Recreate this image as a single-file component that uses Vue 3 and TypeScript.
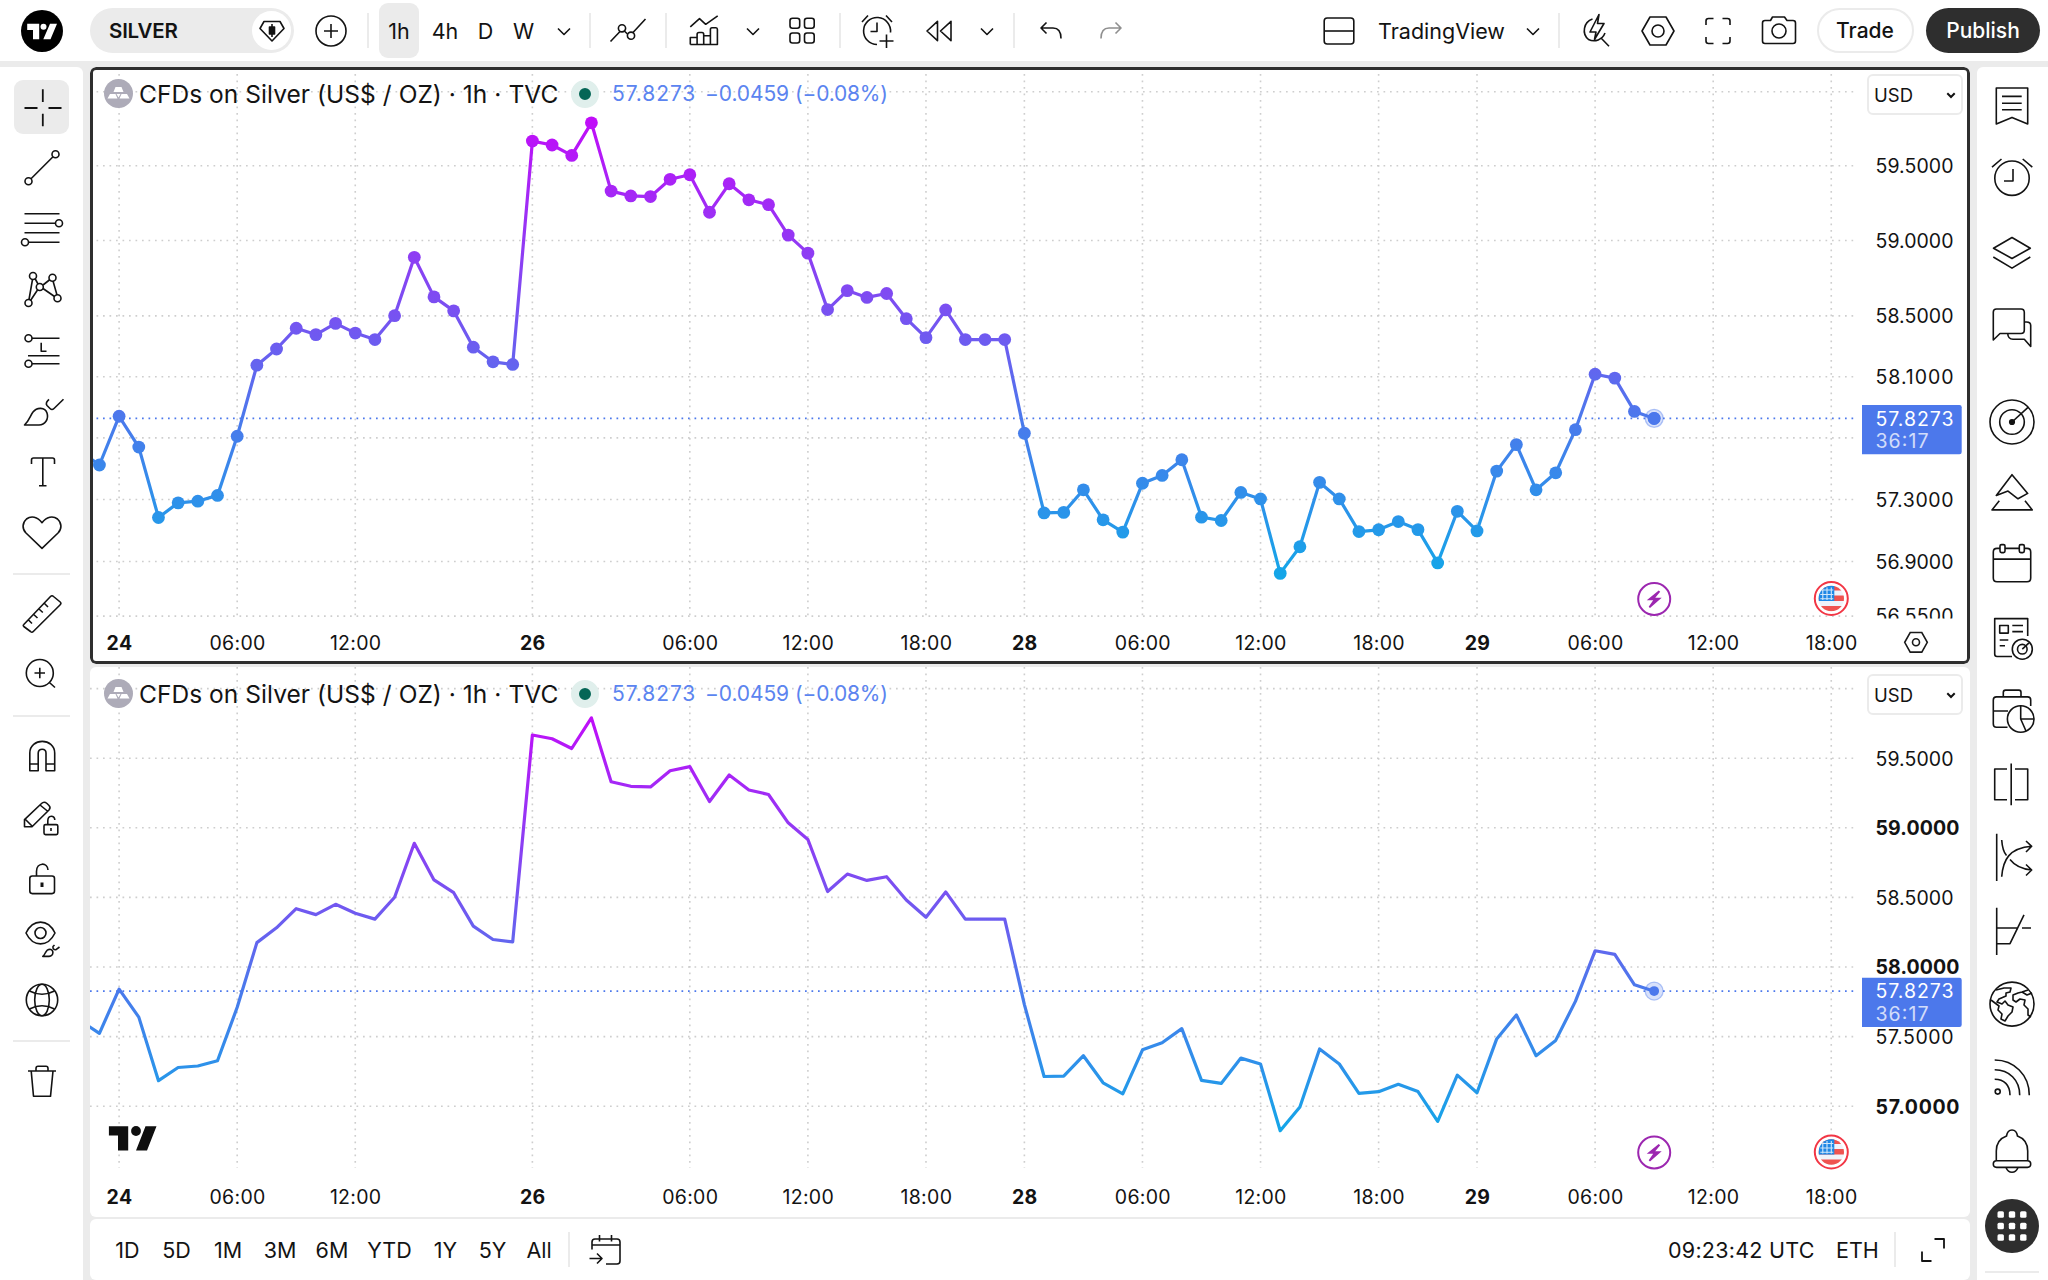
<script setup lang="ts">
interface Tool { w: number; icon?: string; text?: string; cls?: string }

const icons: Record<string, string> = {
  plusCircle: '<circle r="15"/><path d="M-7 0H7M0-7V7"/>',
  chevron: '<path d="M-6-2.500L0 3.500L6-2.500"/>',
  lineChart: '<path d="M-17.500 10.500L-8 .5M-3.700 0L-.5 3M5 1.500L17.500-12"/><circle cx="-6" cy="-2.700" r="3.600"/><circle cx="3" cy="4.700" r="3.600"/>',
  indicators: '<path d="M-13.700-4.200L-4.500-12.300L1.700-6.700L13.700-15.200M-13.700 13.500V6.500H-6.900V13.500M-6.900 6.500V3.500Q-6.900 1.500-5 1.500H-2Q-.3 1.500-.3 3.500V13.500M-.3 4.800H6.400V13.500M6.400 5V-1.500Q6.400-3.300 8-3.300H12Q13.400-3.300 13.400-1.500V13.500H-13.700"/>',
  grid: '<rect x="-12" y="-12.700" width="9.700" height="10" rx="2.500"/><rect x="2.500" y="-12.700" width="9.700" height="10" rx="2.500"/><rect x="-12" y="2" width="9.700" height="10" rx="2.500"/><rect x="2.500" y="2" width="9.700" height="10" rx="2.500"/>',
  alarmAdd: '<path d="M13.500 1.500A13.500 13.500 0 1 0 0 13.500M0-8.500V.5H-6.500M-15-9L-9-15.500M9-15.500L15-9M9.500 3.500V17M2.500 10H16.500"/>',
  replay: '<path d="M-1.500-9.700V9.700L-12 0ZM12-9.700V9.700L1.500 0Z"/>',
  undo: '<path d="M-4.500-8.500L-10-3L-4.500 2.500M-10-3H2Q10-3 10 7.500"/>',
  redo: '<path d="M4.500-8.500L10-3L4.500 2.500M10-3H-2Q-10-3-10 7.500"/>',
  layout: '<rect x="-14.800" y="-13" width="29.600" height="26" rx="3"/><path d="M-14.800 0H14.800"/>',
  flash: '<path d="M-3.500-12A12 12 0 0 0-7.500 8.500A12 12 0 0 0 9 2M5 7L13 15.200M3-16.500L-6 1H0L-1.500 8.500L8-7.500H1.500Z"/>',
  hex: '<path d="M-8-14H8L16 0L8 14H-8L-16 0Z"/><circle r="6"/>',
  full: '<path d="M-12-6V-10Q-12-12.500-9.500-12.500H-4.500M4.500-12.500H9.500Q12-12.500 12-10V-6M12 6V10Q12 12.500 9.500 12.500H4.500M-4.500 12.500H-9.500Q-12 12.500-12 10V6"/>',
  camera: '<path d="M-16.500-8Q-16.500-10.500-14-10.500H-8.500L-6.500-14H5.500L8-10.500H14Q16.500-10.500 16.500-8V10Q16.500 12.500 14 12.500H-14Q-16.500 12.500-16.500 10Z"/><circle r="7"/>',
  gem: '<path d="M-8-9.500H8L12-2.500L0 10L-12-2.500Z"/><path d="M0-7V6" stroke-width="1.600"/><rect x="-2.500" y="-4" width="5" height="7" fill="currentColor"/>',

  cross: '<path d="M-17.500 1H-4.500M6.500 1H19.500M.8-17.700V-5M.8 6.700V19.300" stroke-width="1.800"/>',
  trend: '<circle cx="13.500" cy="-13.700" r="3.500"/><circle cx="-13.500" cy="13.300" r="3.500"/><path d="M-11 10.800L11-11.200"/>',
  fib: '<path d="M-17.500-15.300H17.500M-17.500-5.800H13.500M-17.500 3.700H17.500M-13.500 13.300H17.500"/><circle cx="17" cy="-5.800" r="3.500"/><circle cx="-17" cy="13.300" r="3.500"/>',
  pattern: '<path d="M-9.500-10.500L-13 9.500M-7-11.500L-4-6M1-5L8-10.500M11-9L15 5M1-1.500L12.500 6.500M-4.500 0L-11.500 10.500"/><circle cx="-9" cy="-14" r="3.500"/><circle cx="10.500" cy="-12.300" r="3.500"/><circle cx="-2.200" cy="-3" r="3.500"/><circle cx="-13.500" cy="13" r="3.500"/><circle cx="15.500" cy="8.300" r="3.500"/>',
  position: '<circle cx="-13.500" cy="-12.700" r="3.500"/><circle cx="-13.500" cy="12.700" r="3.500"/><path d="M-10-12.700H17.500M-.8-8.300V.3H4.500M-14 4.700H17.500M-10 12.700H17.500"/>',
  brush: '<path d="M-17.500 13C-13 9-11.500 3-9 0C-5-5 3-5 5 1C7 7 3 13-3 13ZM21.500-12.700L12-3.500Q10-1.500 8-3.500L5-6.500Q3-9 7-12.700"/>',
  text: '<path d="M-10.500-9V-13Q-10.500-15-8.500-15H10.500Q12.500-15 12.500-13V-9M.8-15V12.700M-3 12.700H4.500"/>',
  heart: '<path d="M0 14.300L-16-1C-20-5-20-11-15.500-15C-11-18.500-4.500-17.500 0-11.300C4.500-17.500 11-18.500 15.500-15C20-11 20-5 16-1Z"/>',
  ruler: '<path d="M-18.200 9.500L8.500-18.500Q10-20 11.500-18.500L18.200-13Q19.700-11.700 18.200-10.300L-8.700 16.500Q-10 18-11.500 16.500L-18.200 11.500Q-19.300 10.500-18.200 9.500ZM-13.500 5L-10 8.500M-8.300-.5L-4.500 3M-3-6L.8-2.500M2.500-11.500L6-8"/>',
  zoomIn: '<circle cx="-2.200" cy="-3" r="13.500"/><path d="M7.400 6.500L13 11.500M-7.500-3H3M-2.200-8.300V2.300"/>',
  magnet: '<path d="M-12.200 13.700V-4C-12.200-19.500 12.700-19.500 12.700-4V13.700H4V-4C4-9-3.800-9-3.800-4V13.700ZM-12.200 7H-3.800M4 7H12.700"/>',
  pencilLock: '<path d="M-17.500 8.800V1.600L-.5-14.500Q2-17 5-14.500L7-12.500Q9-10.500 7-8L-10 8.800ZM-16.500 1.500L-10 8M-2-13L6-6.500"/><rect x="2" y="6.600" width="13.800" height="10" rx="1.500"/><path d="M5.800 6.500V3C5.800-3.500 12.800-3 12.800 2M9 10V13"/>',
  lock: '<rect x="-12.200" y="-3" width="24.700" height="17.600" rx="2.500"/><path d="M-5.500-3V-7.500C-5.500-17 5.800-17 6-9"/><path d="M0 3.500V8" stroke-width="3"/>',
  eye: '<path d="M-16-7C-9-21.500 6-21.500 13-7C6 7.500-9 7.500-16-7Z"/><circle cx="-1.500" cy="-7" r="5.500"/><path d="M.8 16.400C4 14 3 9.500 8 9.300C12 9.500 12 16 7 16.400ZM17.500 7L14 9.700Q10.500 10 11 6.500L12.500 5"/>',
  globe: '<circle cy="-1" r="15.700"/><ellipse cy="-1" rx="7.300" ry="15.700"/><path d="M-12.500-10Q0-3.500 12.500-10M-12.500 8Q0 1.500 12.500 8"/>',
  trash: '<path d="M-14-11H14M-6-11V-13.500Q-6-15.700-4-15.700H4Q6-15.700 6-13.500V-11M-10.800-11L-8.500 14.300H8.500L11-11"/>',

  bookmark: '<path d="M-15.700-18H15.700V18L0 11.400L-15.700 18ZM-10-9.600H9.700M-10-2.700H9.700M-10 3.700H9.700"/>',
  alarm: '<circle cy="-.8" r="17.200"/><path d="M1-10V2H-8M-20-11.900L-10.500-20M10.700-20L20.300-11.900"/>',
  layers: '<path d="M-18.500-4.800L0-15.500L18.300-4.800L0 5.500ZM-18.700 4L0 15.100L18.300 4"/>',
  chat: '<path d="M-18.700 14V-14Q-18.700-17-15.500-17H9Q12.300-17 12.300-13.500V4Q12.300 7.500 9 7.500H-12ZM12.300-4H14.500Q18.700-4 18.700-.5V20.500L12.300 13.300H1Q-4 13-4.300 7.500"/>',
  target: '<circle cy="5" r="22"/><circle cy="5" r="12.300"/><circle cy="5" r="2.300" fill="currentColor"/><path d="M0 5L16.300-9.900"/>',
  pyramid: '<path d="M0-16.300L-15.700 4.400L-4 .1L6 7.800L15.700 2.400ZM-12.700 9.700L-20 18.900H20.300L13 9.700"/>',
  calendar: '<path d="M-12-15.600H-15Q-18.700-15.600-18.700-12V14Q-18.700 17.700-15 17.700H15Q18.700 17.700 18.700 14V-12Q18.700-15.600 15-15.600H12.500M-7-15.600H7.500M-18.700-4.900H18.700"/><rect x="-12" y="-19.400" width="5" height="8" rx="1.500"/><rect x="7.300" y="-19.400" width="5" height="8" rx="1.500"/>',
  news: '<path d="M15.700-2V-19.400H-17.300V16Q-17.300 18.500-15 18.500H0"/><rect x="-12.300" y="-12.500" width="8.600" height="7.600"/><path d="M.3-12.500H11M.3-6.400H11M-12.300 2H-3.700M-12.300 7.800H-7"/><circle cx="10.300" cy="11.200" r="10"/><circle cx="10.300" cy="11.200" r="4.800"/><path d="M10.300 11.200L17 4.800"/>',
  portfolio: '<path d="M18.700-5V-11Q18.700-14.100 15.500-14.100H-15.500Q-18.700-14.100-18.700-11V13Q-18.700 16.300-15.500 16.300H-4.500M-8.700-14.100V-18.500Q-8.700-20.900-6.500-20.900H7Q9-20.900 9-18.500V-14.100M-18.700 0H-4"/><circle cx="8.700" cy="8" r="13.300"/><path d="M8.700-5.300V8H22M8.700 8L14 20"/>',
  split: '<path d="M-5-16H-17.300V14.800H-5M-.8-21.600V20.300M3-16H15.700V14.800H3"/>',
  forecast: '<path d="M-15.300-24.300V23M-10.300 18.800C-9 2-3-10 19.700-11.700M-10.300-18Q-9.500-7-5.500-2.500M-2 1.500C3 8 9 11 19.700 12M14-17L19.700-11.700L14-6M14 6.500L19.700 12L14 17.500"/>',
  slope: '<path d="M-15.300-24.300V23M-15.300-4H5M10-4H19M-15.300 11.700H-2L12-17.200"/>',
  earth: '<circle cy="-.9" r="22"/><path d="M-16-15L-8-17H-1L-2-13L-6-12V-9L-13-6L-15-3L-10-1L-7-4L-4 0L1 2L0 7L-4 11L-7 16L-11 14L-10 9L-14 5L-13 1L-21-5M16-15L10-13L6-12L1-10V-5L4-3L8-6L13-5L12 0L16 4V10L19 12M10-13L15-10L20-12"/>',
  feed: '<circle cx="-14.300" cy="12.600" r="2.500"/><path d="M-17.300 .2C-8 .2-2 6-2 16.200M-17.300-9.200C-3-9.200 7.700 1 7.700 16.200M-17.300-19C2-19 17.300-4 17.300 16.200"/>',
  bell: '<path d="M-15.700 8.500V-1C-15.700-9-11-14-5.500-16Q-4.500-22 0-22Q4.500-22 5.500-16C11-14 15.700-9 15.700-1V8.500M-6 15.500Q-4 20.300 0 20.300Q4 20.300 6 15.500"/><rect x="-18.700" y="8.700" width="37.400" height="6.700" rx="3.300"/>',
  apps: '<circle r="27" fill="#2e2e2e" stroke="none"/><g fill="#fff" stroke="none"><rect x="-14.500" y="-14.700" width="6.400" height="6.400" rx="1.500"/><rect x="-3.200" y="-14.700" width="6.400" height="6.400" rx="1.500"/><rect x="8.100" y="-14.700" width="6.400" height="6.400" rx="1.500"/><rect x="-14.500" y="-3.200" width="6.400" height="6.400" rx="1.500"/><rect x="-3.200" y="-3.200" width="6.400" height="6.400" rx="1.500"/><rect x="8.100" y="-3.200" width="6.400" height="6.400" rx="1.500"/><rect x="-14.500" y="8.300" width="6.400" height="6.400" rx="1.500"/><rect x="-3.200" y="8.300" width="6.400" height="6.400" rx="1.500"/><rect x="8.100" y="8.300" width="6.400" height="6.400" rx="1.500"/></g>',
  goTo: '<path d="M-13-.5V-8Q-13-11-10-11H12Q15-11 15-8V11Q15 14 12 14H1M-13-5H15M-5.500-15V-8.500M6.500-15V-8.500M-15.500 8.500H-3M-8 3.500L-3 8.500L-8 13.500"/>',
  expand: '<path d="M1.500-11H11V-1.500M-1.500 11H-11V1.500" stroke-width="1.800"/>',
}

const leftGroups: string[][] = [
  ['cross', 'trend', 'fib', 'pattern', 'position', 'brush', 'text', 'heart'],
  ['ruler', 'zoomIn'],
  ['magnet', 'pencilLock', 'lock', 'eye', 'globe'],
  ['trash'],
]
const rightGroups: string[][] = [
  ['bookmark', 'alarm', 'layers', 'chat'],
  ['target', 'pyramid', 'calendar', 'news', 'portfolio', 'split', 'forecast', 'slope', 'earth', 'feed', 'bell', 'apps'],
]

const headLeft: Tool[] = [
  { w: 73, icon: 'plusCircle' }, { w: 2, cls: 'sep' }, { w: 10 },
  { w: 40, text: '1h', cls: 'on' }, { w: 52, text: '4h' }, { w: 29, text: 'D' }, { w: 47, text: 'W' },
  { w: 33, icon: 'chevron' }, { w: 9 }, { w: 2, cls: 'sep' },
  { w: 74, icon: 'lineChart' }, { w: 2, cls: 'sep' },
  { w: 74, icon: 'indicators' }, { w: 23, icon: 'chevron' }, { w: 75, icon: 'grid' }, { w: 2, cls: 'sep' },
  { w: 71, icon: 'alarmAdd' }, { w: 53, icon: 'replay' }, { w: 44, icon: 'chevron' }, { w: 4 }, { w: 2, cls: 'sep' },
  { w: 72, icon: 'undo' }, { w: 48, icon: 'redo', cls: 'dim' },
]
const headRight: Tool[] = [
  { w: 52, icon: 'layout' }, { w: 153, text: 'TradingView', cls: 'name' }, { w: 30, icon: 'chevron' }, { w: 10 }, { w: 2, cls: 'sep' },
  { w: 71, icon: 'flash' }, { w: 54, icon: 'hex' }, { w: 66, icon: 'full' }, { w: 55, icon: 'camera' },
]

const ranges: [string, number][] = [
  ['1D', 47], ['5D', 51], ['1M', 52], ['3M', 52], ['6M', 52], ['YTD', 63], ['1Y', 49], ['5Y', 45], ['All', 48],
]

// Time scale
const x = (i: number) => 119.1 + 19.68 * i
const times: [number, string, boolean?][] = [
  [0, '24', true], [6, '06:00'], [12, '12:00'], [21, '26', true], [29, '06:00'], [35, '12:00'], [41, '18:00'],
  [46, '28', true], [52, '06:00'], [58, '12:00'], [64, '18:00'], [69, '29', true], [75, '06:00'], [81, '12:00'], [87, '18:00'],
]

// Closes are kept as levels on a logarithmic grid, starting two bars before the 24th
const levels = [
  345, 356, 318.7, 342.3, 396.2, 385, 383.7, 379.3, 334, 279.6, 267.2, 251.3, 256.2, 247.6, 255, 260, 241.7, 197,
  227.3, 238, 265.8, 277, 279, 108, 111, 119, 94, 146.3, 150, 150.5, 137.3, 133.8, 162.5, 140.7, 153, 156.7, 180,
  193.8, 237, 222.5, 227.7, 224.7, 244, 258.5, 237.3, 260, 260, 260, 331.7, 392.7, 392.3, 375, 398, 407.4, 370, 364,
  352, 396, 398.5, 377, 382, 439, 418.6, 369.3, 382, 407, 405.6, 399.3, 405.5, 431, 391.5, 406.5, 360.7, 340.4, 375,
  362, 329, 286.5, 289.5, 315, 320.4,
]
const closes = levels.map((l) => 60 * Math.exp(-(l * 1.30612 - 91.7) / 8856))
const logY = (p: number) => 91.7 + Math.log(60 / p) * 8856
const linY = (p: number) => 688.6 + (60 - p) * 139.2

interface Pane {
  id: string; top: number; h: number; y: (p: number) => number; dots: boolean; grid: number[]
  labels: [number, boolean?][]; v0: number; v1: number; timeY: number; eventY: number; g0: number; g1: number
}
const panes: Pane[] = [
  {
    id: 'a', top: 67, h: 597, y: logY, dots: true, grid: [60, 59.5, 59, 58.5, 58.1, 57.7, 57.3, 56.9, 56.55],
    labels: [[59.5], [59], [58.5], [58.1], [57.3], [56.9], [56.55]], v0: 74, v1: 618.5, timeY: 643, eventY: 599, g0: 120, g1: 575,
  },
  {
    id: 'b', top: 667, h: 550, y: linY, dots: false, grid: [60, 59.5, 59, 58.5, 58, 57.5, 57],
    labels: [[59.5], [59, true], [58.5], [58, true], [57.5], [57, true]], v0: 667, v1: 1168, timeY: 1196.5, eventY: 1152.5, g0: 715, g1: 1131,
  },
]
const line = (p: Pane) => closes.map((c, i) => `${x(i - 2).toFixed(1)},${p.y(c).toFixed(1)}`).join(' ')
const last = 57.8273
</script>

<template>
  <div class="app">
    <header>
      <svg class="logo" width="42" height="42" viewBox="0 0 42 42">
        <circle cx="21" cy="21" r="21" fill="#000" />
        <path d="M6.200 13.800H18.200V29.200H12V20H6.200ZM29 13.800H36L29.500 29.200H22.300Z" fill="#fff" />
        <circle cx="22.500" cy="16.800" r="3" fill="#fff" />
      </svg>
      <div class="search">
        <b>SILVER</b>
        <span><svg class="ic" viewBox="-20 -20 40 40" v-html="icons.gem" /></span>
      </div>
      <div v-for="(t, i) in headLeft" :key="i" class="tool" :class="t.cls" :style="{ width: t.w + 'px' }">
        <svg v-if="t.icon" class="ic" viewBox="-20 -20 40 40" v-html="icons[t.icon]" />
        <template v-else>{{ t.text }}</template>
      </div>
      <i class="grow" />
      <div v-for="(t, i) in headRight" :key="'r' + i" class="tool" :class="t.cls" :style="{ width: t.w + 'px' }">
        <svg v-if="t.icon" class="ic" viewBox="-20 -20 40 40" v-html="icons[t.icon]" />
        <template v-else>{{ t.text }}</template>
      </div>
      <button class="trade">Trade</button>
      <button class="publish">Publish</button>
    </header>

    <div class="body">
      <nav class="left">
        <div v-for="(g, gi) in leftGroups" :key="gi" class="group">
          <div v-for="n in g" :key="n" class="btn" :class="{ active: n === 'cross' }">
            <svg class="ic" viewBox="-20 -20 40 40" v-html="icons[n]" />
          </div>
        </div>
      </nav>

      <main>
        <section v-for="p in panes" :key="p.id" class="pane" :class="'pane-' + p.id" :style="{ height: p.h + 'px' }">
          <svg class="chart" width="1880" :height="p.h" :viewBox="`90 ${p.top} 1880 ${p.h}`">
            <defs>
              <linearGradient :id="'g' + p.id" gradientUnits="userSpaceOnUse" x1="0" x2="0" :y1="p.g0" :y2="p.g1">
                <stop offset="0" stop-color="#c10df9" />
                <stop offset=".54" stop-color="#6464ef" />
                <stop offset=".65" stop-color="#4c78ec" />
                <stop offset="1" stop-color="#14a6e8" />
              </linearGradient>
              <clipPath :id="'c' + p.id"><rect x="90" :y="p.top" width="1880" :height="p.v1 - p.top" /></clipPath>
            </defs>
            <g class="gridlines">
              <line v-for="t in times" :key="t[0]" :x1="x(t[0])" :x2="x(t[0])" :y1="p.v0" :y2="p.v1" />
              <line v-for="v in p.grid" :key="v" x1="90" x2="1858" :y1="p.y(v)" :y2="p.y(v)" />
            </g>
            <line class="last" x1="90" x2="1858" :y1="p.y(last)" :y2="p.y(last)" />
            <polyline :points="line(p)" fill="none" :stroke="`url(#g${p.id})`" stroke-width="3.200" stroke-linejoin="round" />
            <g v-if="p.dots" :fill="`url(#g${p.id})`">
              <circle v-for="(c, i) in closes" :key="i" :cx="x(i - 2)" :cy="p.y(c)" r="6.400" />
            </g>
            <circle :cx="x(78)" :cy="p.y(last)" r="9" fill="#4c78ec" fill-opacity=".22" stroke="#4c78ec" stroke-opacity=".4" stroke-width="1.300" />
            <circle :cx="x(78)" :cy="p.y(last)" :r="p.dots ? 6.4 : 4.9" fill="#4c78ec" />

            <g :clip-path="`url(#c${p.id})`">
              <text v-for="l in p.labels" :key="l[0]" class="price" :class="{ bold: l[1] }" x="1875.500" :y="p.y(l[0]) + 7.3" :textLength="l[1] ? 84 : 78">{{ l[0].toFixed(4) }}</text>
            </g>
            <path :transform="`translate(1862 ${p.y(last) - 13.3})`" d="M0 0H97.500Q99.700 0 99.700 2.200V47Q99.700 49.300 97.500 49.300H0Z" fill="#4c78eb" />
            <text class="price tag" x="1875.500" :y="p.y(last) + 7.3" textLength="78">57.8273</text>
            <text class="price tag faded" x="1875.500" :y="p.y(last) + 29.5" textLength="53">36:17</text>

            <text v-for="t in times" :key="'t' + t[0]" class="time" :class="{ bold: t[2] }" :x="x(t[0]) + .4" :y="p.timeY + 7">{{ t[1] }}</text>

            <g :transform="`translate(1654.200 ${p.eventY})`">
              <circle r="16" fill="#fff" stroke="#9c27b0" stroke-width="2" />
              <path d="M4.500-8.500L-7.500 1.300H-1L-5.500 7.800L-4.200 9L7.500-1.300H1L6-7.300Z" fill="#9c27b0" />
            </g>
            <g :transform="`translate(1831.300 ${p.eventY - .5})`">
              <clipPath :id="'f' + p.id"><circle r="12.700" /></clipPath>
              <circle r="16.500" fill="#fff" stroke="#f23645" stroke-width="2" />
              <g :clip-path="`url(#f${p.id})`">
                <rect x="-13" y="-13" width="26" height="26" fill="#f0f3fa" />
                <path d="M-13-13H13V-8H-13ZM-13-3H13V2.500H-13ZM-13 7.500H13V13H-13Z" fill="#ef5350" />
                <rect x="-13" y="-13" width="16" height="15.500" fill="#1e88e5" />
                <path d="M-11-8.500H2M-11-4H2M-11 .3H2M-8.500-11V1.500M-4.300-11V1.500M0-11V1.500" stroke="#fff" stroke-width="1.100" opacity=".8" />
              </g>
            </g>
            <g v-if="p.dots" transform="translate(1916 642.300)" fill="none" stroke="#1a1a1a" stroke-width="1.600">
              <path d="M-5.800-9.800H5.800L11.300 0L5.800 9.800H-5.800L-11.300 0Z" /><circle r="3.500" />
            </g>
            <g v-else fill="#0f0f0f">
              <path d="M108.900 1126.300H128.200V1150.500H118V1135.500H108.900ZM145.500 1126.300H156.500L147 1150.500H136Z" /><circle cx="136" cy="1131" r="4.900" />
            </g>
          </svg>
          <div class="legend">
            <svg width="29" height="29" viewBox="-14.500 -14.500 29 29">
              <circle r="14.500" fill="#adabb8" />
              <path d="M-3-6.500H3L5-1.500H-5ZM-8.500 .5H-3L-1 5H-11ZM3 .5H8.500L11 5H1ZM-2 .5H2L0 4Z" fill="#fff" />
            </svg>
            <span class="title">CFDs on Silver (US$ / OZ) · 1h · TVC</span>
            <i class="status" />
            <span class="val price-now">57.8273</span><span class="val change">−0.0459</span><span class="val pct">(−0.08%)</span>
          </div>
          <div class="usd">USD<svg width="10" height="8" viewBox="-5 -4 10 8"><path d="M-3.700-1.700L0 2L3.700-1.700" fill="none" stroke="#111" stroke-width="2" /></svg></div>
        </section>

        <footer>
          <div v-for="r in ranges" :key="r[0]" class="range" :style="{ width: r[1] + 'px' }">{{ r[0] }}</div>
          <i class="sep first" />
          <svg class="ic goto" viewBox="-20 -20 40 40" v-html="icons.goTo" />
          <i class="grow" />
          <span class="clock">09:23:42 UTC</span>
          <span class="eth">ETH</span>
          <i class="sep" />
          <svg class="ic expand" viewBox="-20 -20 40 40" v-html="icons.expand" />
        </footer>
      </main>

      <aside>
        <div v-for="(g, gi) in rightGroups" :key="gi" class="rgroup">
          <div v-for="n in g" :key="n" class="rbtn"><svg class="ic" viewBox="-20 -20 40 40" v-html="icons[n]" /></div>
        </div>
        <i class="rule" />
      </aside>
    </div>
  </div>
</template>

<style>
body { margin: 0; background: #ebebeb; }
</style>

<style scoped>
.app { width: 2048px; height: 1280px; overflow: hidden; display: flex; flex-direction: column; gap: 6px; background: #ebebeb; color: #131313; font-family: Inter, "Liberation Sans", sans-serif; }
.ic { width: 40px; height: 40px; flex: none; overflow: visible; fill: none; stroke: currentColor; color: #131313; stroke-width: 1.6; stroke-linejoin: round; }
header { height: 61px; flex: none; display: flex; align-items: center; background: #fff; box-sizing: border-box; padding: 0 8px 0 20.500px; }
.logo { margin-right: 27.500px; flex: none; }
.search { width: 204px; height: 45px; flex: none; box-sizing: border-box; padding: 0 3px 0 19px; border-radius: 23px; background: #ebebeb; display: flex; align-items: center; justify-content: space-between; font-size: 20.500px; }
.search b { font-weight: 600; letter-spacing: -.2px; }
.search span { width: 39px; height: 39px; border-radius: 50%; background: #fff; display: flex; align-items: center; justify-content: center; }
.tool { height: 55px; flex: none; display: flex; align-items: center; justify-content: center; font-size: 21.500px; white-space: nowrap; }
.tool.on { background: #ebebeb; border-radius: 9px; }
.tool.sep { height: 35px; background: #ebebeb; }
.tool.dim .ic { color: #8f8f8f; }
.grow { flex: 1; }
header button { height: 45px; box-sizing: border-box; border-radius: 23px; font: 500 21px Inter, sans-serif; padding: 0; flex: none; }
.trade { width: 97px; margin-left: 10.500px; border: 2px solid #ebebeb; background: #fff; color: #131313; }
.publish { width: 114px; margin-left: 12.500px; border: 0; background: #2e2e2e; color: #fff; }
.body { flex: 1; display: flex; min-height: 0; }
.left { width: 83px; background: #fff; border-radius: 0 6px 0 0; padding-top: 9.500px; box-sizing: border-box; margin-right: 7px; flex: none; }
.group + .group::before { content: ""; display: block; height: 2px; margin: 8px 13px 10px; background: #ebebeb; }
.btn { height: 61px; display: flex; align-items: center; justify-content: center; }
.btn.active { height: 54px; width: 55px; margin: 3.500px 14px; background: #ebebeb; border-radius: 9px; }
main { width: 1880px; flex: none; display: flex; flex-direction: column; }
.pane { position: relative; flex: none; background: #fff; border-radius: 6px; overflow: hidden; }
.pane-a { margin-bottom: 3px; }
.pane-a::after { content: ""; position: absolute; inset: 0; border: 3px solid #2e2e2e; border-radius: 6px; }
.pane-b { margin-bottom: 2px; }
.chart { display: block; }
.gridlines line { stroke: #cecece; stroke-width: 1.600; stroke-dasharray: 1.700 4.800; }
.last { stroke: #4c78ec; stroke-width: 1.700; stroke-dasharray: 1.700 4.800; }
.price, .time { font-size: 19.500px; fill: #131313; }
.time { text-anchor: middle; letter-spacing: .3px; }
.bold { font-weight: 700; }
.tag { fill: #fff; }
.faded { opacity: .75; }
.legend { position: absolute; left: 14px; top: 12px; height: 29px; display: flex; align-items: center; white-space: nowrap; }
.title { font-size: 24.500px; letter-spacing: .05px; margin-left: 6px; width: 427px; }
.status { width: 12px; height: 12px; border-radius: 50%; background: #056656; border: 8px solid #e0efec; margin-right: 13px; margin-left: 5px; }
.val { font-size: 21px; color: #5b84f0; }
.price-now { width: 93px; letter-spacing: .9px; }
.change { width: 90px; letter-spacing: -.1px; }
.pct { letter-spacing: -.2px; }
.usd { position: absolute; left: 1777px; top: 7px; width: 96px; height: 41px; box-sizing: border-box; border: 2px solid #ebebeb; border-radius: 6px; background: #fff; display: flex; align-items: center; justify-content: space-between; padding: 0 5px 0 5px; font-size: 18.500px; }
footer { flex: 1; background: #fff; border-radius: 6px; display: flex; align-items: center; padding: 0 6px 0 14px; font-size: 21.500px; }
.range { text-align: center; flex: none; white-space: nowrap; }
.sep { width: 2px; height: 35px; background: #ebebeb; flex: none; }
.first { margin-left: 4.500px; }
.goto { margin-left: 15.500px; }
.clock { width: 148px; margin-right: 20px; white-space: nowrap; letter-spacing: .25px; }
.eth { width: 58px; }
.expand { margin: 0 11px 0 17px; }
aside { width: 71px; margin-left: 7px; background: #fff; border-radius: 6px 0 0 0; flex: none; padding: 2px 1.500px 0 0; box-sizing: border-box; }
.rgroup + .rgroup { margin-top: 17.500px; }
.rbtn { height: 73.500px; display: flex; align-items: center; justify-content: center; }
.rule { display: block; width: 54px; height: 2px; margin: 8px auto 0; background: #ebebeb; }
</style>
